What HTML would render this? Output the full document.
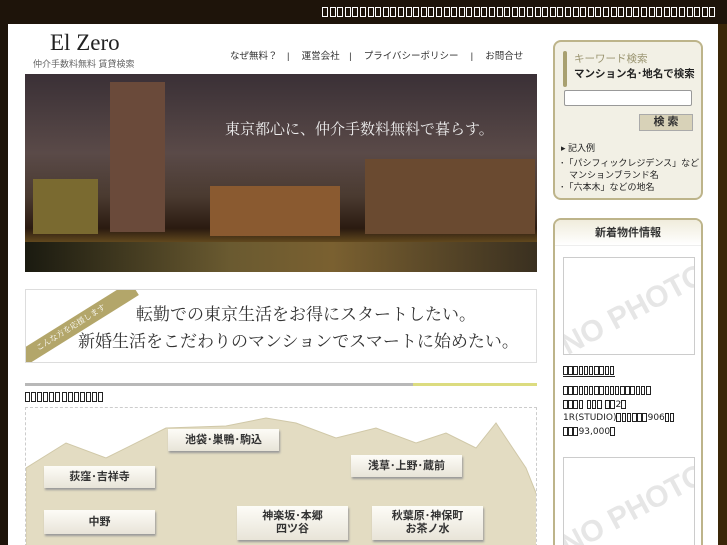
<!DOCTYPE html>
<html><head><meta charset="utf-8"><style>
*{margin:0;padding:0;box-sizing:border-box}
html,body{width:727px;height:545px;overflow:hidden}
body{background:#1e140a;font-family:"Liberation Sans","Noto Sans CJK JP",sans-serif;position:relative}
.a{position:absolute}
i{display:inline-block;border:1px solid currentColor;vertical-align:middle}
.t1 i{width:6px;height:10px;margin-right:1.6px}
.t2 i{width:5px;height:10px;margin-right:1.1px}
.t3 i{width:4.5px;height:9px;margin-right:0.7px}
</style></head><body>
<div class="a t1" style="left:322px;top:7px;color:#fff;line-height:10px;white-space:nowrap"><i></i><i></i><i></i><i></i><i></i><i></i><i></i><i></i><i></i><i></i><i></i><i></i><i></i><i></i><i></i><i></i><i></i><i></i><i></i><i></i><i></i><i></i><i></i><i></i><i></i><i></i><i></i><i></i><i></i><i></i><i></i><i></i><i></i><i></i><i></i><i></i><i></i><i></i><i></i><i></i><i></i><i></i><i></i><i></i><i></i><i></i><i></i><i></i><i></i><i></i><i></i><i></i></div>
<div class="a" style="left:8px;top:24px;width:710px;height:521px;background:#fff"></div>
<div class="a" style="left:718px;top:24px;width:9px;height:521px;background:#3a2608"></div>
<div class="a" style="left:50px;top:30px;font-family:'Liberation Serif',serif;font-size:23px;color:#222">El Zero</div>
<div class="a" style="left:33px;top:57px;font-size:9px;color:#666">仲介手数料無料 賃貸検索</div>
<div class="a" style="left:230px;top:48px;font-size:9.5px;color:#333">なぜ無料？　|　 運営会社　|　 プライバシーポリシー　 |　 お問合せ</div>
<div class="a" style="left:25px;top:74px;width:512px;height:198px;background:linear-gradient(#3a3036 0%,#5a4a48 40%,#4a3a30 62%,#2a1a10 78%,#6a5020 86%,#1a1208 100%);overflow:hidden">
 <div class="a" style="left:85px;top:8px;width:55px;height:150px;background:#6a4a3a"></div>
 <div class="a" style="left:8px;top:105px;width:65px;height:55px;background:#7a6a30"></div>
 <div class="a" style="left:185px;top:112px;width:130px;height:50px;background:#8a5a30"></div>
 <div class="a" style="left:340px;top:85px;width:170px;height:75px;background:#6a4a30"></div>
 <div class="a" style="left:0;top:168px;width:512px;height:30px;background:linear-gradient(90deg,#1a1a10,#6a5a30 40%,#7a6030 60%,#3a3020)"></div>
 <div class="a" style="left:200px;top:44px;font-family:'Noto Serif CJK SC',serif;font-size:15px;color:#eee">東京都心に、仲介手数料無料で暮らす。</div>
</div>
<div class="a" style="left:25px;top:289px;width:512px;height:74px;border:1px solid #ddd;overflow:hidden">
 <div class="a" style="left:-30px;top:30px;width:150px;height:16px;background:#b3a66a;transform:rotate(-32deg);color:#fff;font-size:8px;text-align:center;line-height:16px;font-family:'Noto Serif CJK SC',serif">こんな方を応援します</div>
 <div class="a" style="left:110px;top:10px;font-family:'Noto Serif CJK SC',serif;font-size:17px;color:#333">転勤での東京生活をお得にスタートしたい。</div>
 <div class="a" style="left:52px;top:37px;font-family:'Noto Serif CJK SC',serif;font-size:17px;color:#333">新婚生活をこだわりのマンションでスマートに始めたい。</div>
</div>
<div class="a" style="left:25px;top:383px;width:388px;height:3px;background:#b8b8b8"></div>
<div class="a" style="left:413px;top:383px;width:124px;height:3px;background:#dcdc80"></div>
<div class="a t2" style="left:25px;top:392px;color:#222;line-height:10px;white-space:nowrap"><i></i><i></i><i></i><i></i><i></i><i></i><i></i><i></i><i></i><i></i><i></i><i></i><i></i></div>
<div class="a" style="left:25px;top:407px;width:512px;height:140px;border:1px dashed #ccc;overflow:hidden">
<svg width="512" height="140" style="position:absolute;left:0;top:0"><path d="M0 60 L40 35 L80 50 L140 20 L200 18 L240 10 L270 15 L310 30 L350 20 L390 35 L420 25 L450 40 L470 15 L500 60 L512 90 L512 140 L0 140Z" fill="#e3dcc2" stroke="#d0c8a8"/></svg>
<style>.b{position:absolute;background:linear-gradient(#fdfcf7,#e8e4d8);box-shadow:1px 2px 2px #999;font-size:11px;font-weight:bold;color:#333;text-align:center;line-height:13px;display:flex;align-items:center;justify-content:center}</style>
<div class="b" style="left:142px;top:21px;width:111px;height:22px">池袋･巣鴨･駒込</div>
<div class="b" style="left:18px;top:58px;width:111px;height:22px">荻窪･吉祥寺</div>
<div class="b" style="left:325px;top:47px;width:111px;height:22px">浅草･上野･蔵前</div>
<div class="b" style="left:18px;top:102px;width:111px;height:24px">中野</div>
<div class="b" style="left:211px;top:98px;width:111px;height:34px">神楽坂･本郷<br>四ツ谷</div>
<div class="b" style="left:346px;top:98px;width:111px;height:34px">秋葉原･神保町<br>お茶ノ水</div>
</div>
<div class="a" style="left:553px;top:40px;width:150px;height:160px;background:#f2f0e5;border:2px solid #bdb48a;border-radius:8px">
 <div class="a" style="left:8px;top:9px;width:4px;height:36px;background:#a8a070;border-radius:2px"></div>
 <div class="a" style="left:19px;top:9px;font-size:10.5px;color:#9a9470">キーワード検索</div>
 <div class="a" style="left:19px;top:24px;font-size:10.5px;font-weight:bold;color:#222;white-space:nowrap">マンション名･地名で検索</div>
 <div class="a" style="left:9px;top:48px;width:128px;height:16px;background:#fff;border:1px solid #999;border-radius:2px"></div>
 <div class="a" style="left:84px;top:72px;width:54px;height:17px;background:#d8d2b8;border:1px solid #aaa;font-size:11px;font-weight:bold;color:#333;text-align:center;line-height:15px">検 索</div>
 <div class="a" style="left:6px;top:99px;font-size:9px;color:#222">▸ 記入例</div>
 <div class="a" style="left:5px;top:115px;font-size:9px;color:#222;line-height:12px;white-space:nowrap">･「パシフィックレジデンス」など<br>　マンションブランド名<br>･「六本木」などの地名</div>
</div>
<div class="a" style="left:553px;top:218px;width:150px;height:340px;background:#fff;border:2px solid #bdb48a;border-radius:8px 8px 0 0">
 <div class="a" style="left:0;top:0;width:146px;height:26px;background:linear-gradient(#f0ecdc,#fff);border-radius:6px 6px 0 0;border-bottom:1px solid #eee;text-align:center;font-size:11px;font-weight:bold;color:#333;line-height:26px">新着物件情報</div>
 <div class="a" style="left:8px;top:37px;width:132px;height:98px;border:1px solid #ccc;overflow:hidden"><div class="a" style="left:-10px;top:35px;font-size:30px;font-weight:bold;color:#e6e6e6;transform:rotate(-28deg);white-space:nowrap">NO PHOTO</div></div>
 <div class="a t3" style="left:8px;top:146px;color:#222;line-height:10px;white-space:nowrap;border-bottom:1px solid #222"><i></i><i></i><i></i><i></i><i></i><i></i><i></i><i></i><i></i><i></i></div>
 <div class="a t3" style="left:8px;top:165px;font-size:9px;color:#222;line-height:13.5px;white-space:nowrap;font-family:'DejaVu Sans',sans-serif"><i></i><i></i><i></i><i></i><i></i><i></i><i></i><i></i><i></i><i></i><i></i><i></i><i></i><i></i><i></i><i></i><i></i><br><i></i><i></i><i></i><i></i> <i></i><i></i><i></i> <i></i><i></i>2<i></i><br>1R(STUDIO)<i></i><i></i><i></i><i></i><i></i><i></i>906<i></i><i></i><br><i></i><i></i><i></i>93,000<i></i></div>
 <div class="a" style="left:8px;top:237px;width:132px;height:98px;border:1px solid #ccc;overflow:hidden"><div class="a" style="left:-10px;top:35px;font-size:30px;font-weight:bold;color:#e6e6e6;transform:rotate(-28deg);white-space:nowrap">NO PHOTO</div></div>
</div>
</body></html>
